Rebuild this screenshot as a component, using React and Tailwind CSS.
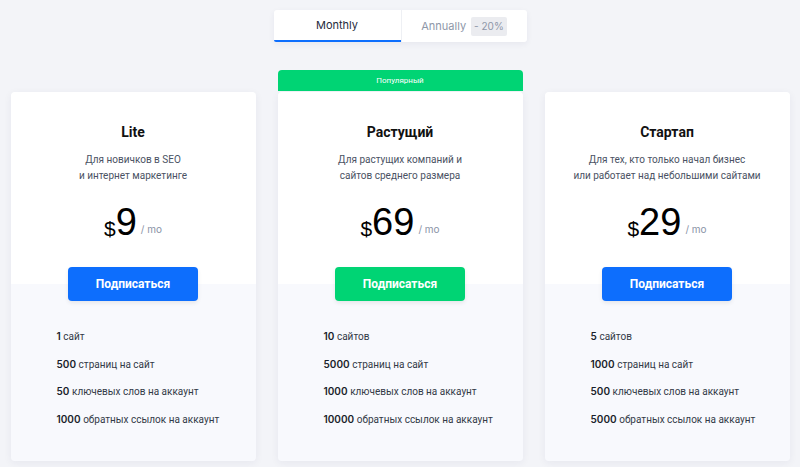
import React from 'react';

const plans = [
  {
    name: 'Lite',
    desc: ['Для новичков в SEO', 'и интернет маркетинге'],
    price: '9',
    color: 'bg-[#0d6efd]',
    features: [
      ['1', 'сайт'],
      ['500', 'страниц на сайт'],
      ['50', 'ключевых слов на аккаунт'],
      ['1000', 'обратных ссылок на аккаунт'],
    ],
  },
  {
    name: 'Растущий',
    desc: ['Для растущих компаний и', 'сайтов среднего размера'],
    price: '69',
    color: 'bg-[#00d474]',
    popular: true,
    features: [
      ['10', 'сайтов'],
      ['5000', 'страниц на сайт'],
      ['1000', 'ключевых слов на аккаунт'],
      ['10000', 'обратных ссылок на аккаунт'],
    ],
  },
  {
    name: 'Стартап',
    desc: ['Для тех, кто только начал бизнес', 'или работает над небольшими сайтами'],
    price: '29',
    color: 'bg-[#0d6efd]',
    features: [
      ['5', 'сайтов'],
      ['1000', 'страниц на сайт'],
      ['500', 'ключевых слов на аккаунт'],
      ['5000', 'обратных ссылок на аккаунт'],
    ],
  },
];

const latin = { fontFamily: 'Inter, "Liberation Sans", sans-serif' };
const cyr = { fontFamily: 'Roboto, "Liberation Sans", sans-serif' };

function PlanCard({ plan }) {
  return (
    <div className="relative w-[245px] rounded-[4px] shadow-[0_2px_8px_rgba(30,40,90,0.06)]">
      {plan.popular && (
        <div
          className="absolute left-0 right-0 top-[-22px] h-[21px] rounded-t-[4px] bg-[#00d474] text-white text-[8px] flex items-center justify-center"
          style={cyr}
        >
          Популярный
        </div>
      )}
      <div className="bg-white rounded-t-[4px] pt-[30px] flex flex-col items-center">
        <div className="h-5 leading-5 text-[14px] font-bold text-[#111]" style={cyr}>
          {plan.name}
        </div>
        <div className="mt-[10px] text-[10px] leading-4 text-[#4a5263] text-center" style={cyr}>
          {plan.desc.map(l => (
            <div key={l}>{l}</div>
          ))}
        </div>
        <div className="mt-[18px] h-10 flex items-end text-black" style={{ fontFamily: '"Liberation Sans", Arial, sans-serif' }}>
          <span className="text-[21px] leading-none mb-[3px]">$</span>
          <span className="text-[38px] leading-[40px]">{plan.price}</span>
          <span className="text-[10px] text-[#8a93a6] ml-[4px] mb-[5px]" style={latin}>/ mo</span>
        </div>
        <button
          className={`${plan.color} relative z-10 mt-[25px] mb-[-17px] w-[130px] h-[34px] rounded-[4px] text-white text-[12px] font-bold shadow-[0_2px_4px_rgba(0,0,0,0.08)]`}
          style={cyr}
        >
          Подписаться
        </button>
      </div>
      <div className="bg-[#f8f9fd] rounded-b-[4px] pt-[44px] pb-[33px] pl-[46px] flex flex-col gap-[10.5px]">
        {plan.features.map(([n, t]) => (
          <div key={t} className="text-[10px] leading-4 text-[#333a47]">
            <span className="font-semibold text-[#1a1f2b]" style={latin}>{n}</span>{' '}
            <span style={cyr}>{t}</span>
          </div>
        ))}
      </div>
    </div>
  );
}

export default function App() {
  return (
    <div className="w-[800px] h-[467px] bg-[#f3f4f8] overflow-hidden">
      <div className="pt-[10px] flex justify-center">
        <div className="flex h-8 w-[253px] bg-white rounded-[3px] shadow-[0_2px_6px_rgba(30,40,90,0.06)]" style={latin}>
          <div className="w-[127px] flex items-center justify-center text-[11px] text-[#1e2a3c] border-b-2 border-[#0d6efd] rounded-bl-[2px]">
            Monthly
          </div>
          <div className="flex-1 flex items-center justify-center gap-[5px] text-[11px] text-[#8e97a8] border-l border-[#eef0f4]">
            Annually
            <span className="bg-[#ebecf0] text-[#8e97a8] px-[3px] py-[2px] rounded-[2px] text-[10px]">- 20%</span>
          </div>
        </div>
      </div>
      <div className="mt-[50px] flex justify-center gap-[22px]">
        {plans.map(p => (
          <PlanCard key={p.name} plan={p} />
        ))}
      </div>
    </div>
  );
}
